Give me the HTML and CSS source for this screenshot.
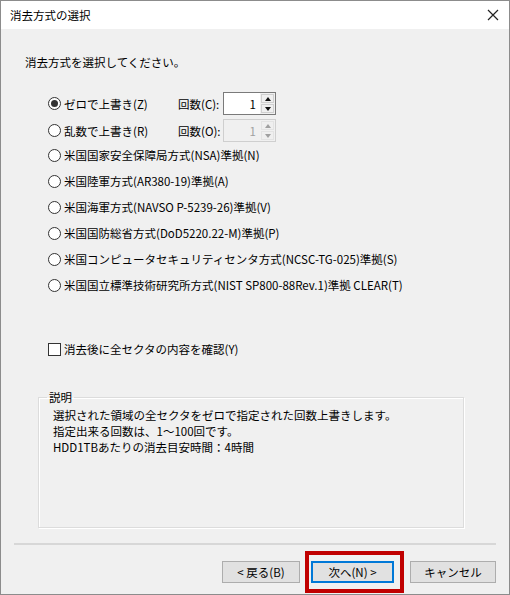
FILE: index.html
```html
<!DOCTYPE html>
<html lang="ja">
<head>
    <meta charset="UTF-8">
    <title>消去方式の選択</title>
    <link rel="stylesheet" href="styles.css">
</head>
<body>
    <div class="window">
        <div class="titlebar">
            <span class="title">消去方式の選択</span>
            <svg class="close" width="12" height="12" viewBox="0 0 12 12">
                <path d="M1 1 L11 11 M11 1 L1 11" stroke="#222" stroke-width="1.2" fill="none"/>
            </svg>
        </div>

        <div class="content">
            <p class="intro">消去方式を選択してください。</p>

            <div class="options">
                <div class="option tall">
                    <label class="radio-label"><input type="radio" name="method" checked><span>ゼロで上書き(Z)</span></label>
                    <span class="count-label">回数(C):</span>
                    <div class="spinner">
                        <input type="text" class="spin-value" value="1">
                        <div class="spin-buttons">
                            <span class="spin-btn up"></span>
                            <span class="spin-btn down"></span>
                        </div>
                    </div>
                </div>
                <div class="option tall second">
                    <label class="radio-label"><input type="radio" name="method"><span>乱数で上書き(R)</span></label>
                    <span class="count-label">回数(O):</span>
                    <div class="spinner disabled">
                        <input type="text" class="spin-value" value="1" disabled>
                        <div class="spin-buttons">
                            <span class="spin-btn up"></span>
                            <span class="spin-btn down"></span>
                        </div>
                    </div>
                </div>
                <div class="option"><label class="radio-label"><input type="radio" name="method"><span>米国国家安全保障局方式(NSA)準拠(N)</span></label></div>
                <div class="option"><label class="radio-label"><input type="radio" name="method"><span>米国陸軍方式(AR380-19)準拠(A)</span></label></div>
                <div class="option"><label class="radio-label"><input type="radio" name="method"><span>米国海軍方式(NAVSO P-5239-26)準拠(V)</span></label></div>
                <div class="option"><label class="radio-label"><input type="radio" name="method"><span>米国国防総省方式(DoD5220.22-M)準拠(P)</span></label></div>
                <div class="option"><label class="radio-label"><input type="radio" name="method"><span>米国コンピュータセキュリティセンタ方式(NCSC-TG-025)準拠(S)</span></label></div>
                <div class="option"><label class="radio-label"><input type="radio" name="method"><span>米国国立標準技術研究所方式(NIST SP800-88Rev.1)準拠 CLEAR(T)</span></label></div>
            </div>

            <label class="check-label"><input type="checkbox"><span>消去後に全セクタの内容を確認(Y)</span></label>

            <fieldset class="description">
                <legend>説明</legend>
                <p>選択された領域の全セクタをゼロで指定された回数上書きします。</p>
                <p>指定出来る回数は、1～100回です。</p>
                <p>HDD1TBあたりの消去目安時間：4時間</p>
            </fieldset>

            <div class="separator"></div>

            <div class="buttons">
                <button type="button" class="btn back">&lt; 戻る(B)</button>
                <span class="highlight">
                    <button type="button" class="btn next">次へ(N) &gt;</button>
                </span>
                <button type="button" class="btn cancel">キャンセル</button>
            </div>
        </div>
    </div>
</body>
</html>
```

FILE: styles.css
```css
* {
    margin: 0;
    padding: 0;
    box-sizing: border-box;
}

body {
    font-family: "Noto Sans CJK JP", "Noto Sans", sans-serif;
    font-size: 11.5px;
    color: #000;
    background: #fff;
}

.window {
    width: 510px;
    height: 595px;
    border: 1px solid #8c8c8c;
    background: #f0f0f0;
    display: flex;
    flex-direction: column;
}

.titlebar {
    height: 28px;
    background: #fff;
    display: flex;
    align-items: center;
    justify-content: space-between;
    padding: 0 10px 0 9px;
}

.title {
    line-height: 16px;
}

.content {
    flex: 1;
    display: flex;
    flex-direction: column;
    padding-left: 24px;
}

.intro {
    margin-top: 25px;
    line-height: 16px;
}

/* ラジオボタン一覧 */
.options {
    margin-top: 22px;
    margin-left: 23px;
    display: flex;
    flex-direction: column;
}

.option {
    height: 26px;
    display: flex;
    align-items: center;
}

.option.tall {
    height: 23px;
}

.option.second {
    margin-top: 4px;
}

.radio-label,
.check-label {
    display: flex;
    align-items: center;
    gap: 3px;
    line-height: 16px;
}

.option.tall .radio-label {
    width: 130px;
}

input[type="radio"] {
    appearance: none;
    width: 13px;
    height: 13px;
    border: 1px solid #333;
    border-radius: 50%;
    background: #fff;
    display: grid;
    place-items: center;
}

input[type="radio"]:checked::after {
    content: "";
    width: 7px;
    height: 7px;
    border-radius: 50%;
    background: #333;
}

.count-label {
    width: 45px;
    line-height: 16px;
}

.spinner {
    display: flex;
    height: 23px;
    width: 53px;
    border: 1px solid #7a7a7a;
    background: #fff;
}

.spinner.disabled {
    border-color: #cfcfcf;
    background: #f0f0f0;
}

.spin-value {
    width: 36px;
    border: none;
    background: transparent;
    font: inherit;
    text-align: right;
    padding-right: 4px;
    color: #000;
    outline: none;
}

.spinner.disabled .spin-value {
    color: #a0a0a0;
}

.spin-buttons {
    flex: 1;
    display: flex;
    flex-direction: column;
    gap: 1px;
    padding: 1px;
    background: #f0f0f0;
}

.spin-btn {
    flex: 1;
    border: 1px solid #cfcfcf;
    background: #efefef;
    display: grid;
    place-items: center;
}

.spin-btn::after {
    content: "";
    border-left: 3.5px solid transparent;
    border-right: 3.5px solid transparent;
}

.spin-btn.up::after {
    border-bottom: 4px solid #111;
}

.spin-btn.down::after {
    border-top: 4px solid #111;
}

.spinner.disabled .spin-btn {
    border-color: #e3e3e3;
}

.spinner.disabled .spin-btn.up::after {
    border-bottom-color: #a0a0a0;
}

.spinner.disabled .spin-btn.down::after {
    border-top-color: #a0a0a0;
}

/* チェックボックス */
.check-label {
    margin-top: 43px;
    margin-left: 23px;
}

input[type="checkbox"] {
    appearance: none;
    width: 13px;
    height: 13px;
    border: 1px solid #333;
    background: #fff;
}

/* 説明グループ */
.description {
    margin-top: 32px;
    margin-left: 13px;
    width: 426px;
    height: 139px;
    border: 1px solid #dcdcdc;
    box-shadow: inset 1px 1px 0 #fff, 1px 1px 0 #fff;
    padding: 0 14px;
}

.description legend {
    margin-left: -6px;
    padding: 0 2px;
    line-height: 16px;
}

.description p {
    line-height: 16px;
}

.description p:first-of-type {
    margin-top: 2px;
}

.separator {
    margin-top: 15px;
    margin-left: -11px;
    width: 482px;
    height: 2px;
    background: #d7d7d7;
}

/* 下部ボタン */
.buttons {
    margin-top: 16px;
    margin-left: 197px;
    display: flex;
    align-items: center;
}

.btn {
    height: 22px;
    font: inherit;
    background: #e1e1e1;
    border: 1px solid #adadad;
    color: #000;
}

.back {
    width: 78px;
}

.highlight {
    position: relative;
    margin-left: 11px;
    display: flex;
}

.highlight::after {
    content: "";
    position: absolute;
    left: -6px;
    top: -10px;
    right: -10px;
    bottom: -10px;
    border: 4px solid #c00000;
}

.next {
    width: 83px;
    border: 1px solid #0078d7;
    box-shadow: inset 0 0 0 1px #0078d7;
}

.cancel {
    width: 86px;
    margin-left: 16px;
}
```
